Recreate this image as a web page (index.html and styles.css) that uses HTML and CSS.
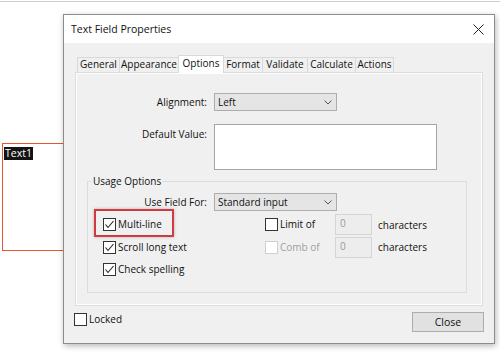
FILE: index.html
```html
<!DOCTYPE html>
<html>
<head>
<meta charset="utf-8">
<link rel="stylesheet" href="styles.css">
</head>
<body>
<div class="desk">
  <div class="topline"></div>
  <div class="pdf-field"><span class="field-name">Text1</span></div>

  <div class="dialog">
    <div class="titlebar">
      <span class="title">Text Field Properties</span>
      <svg class="close-x" width="11" height="11" viewBox="0 0 11 11"><path d="M0.5 0.5L10.5 10.5M10.5 0.5L0.5 10.5" stroke="#222" stroke-width="1" fill="none"/></svg>
    </div>
    <div class="dlg-body">
      <div class="tabs">
        <div class="tab t1">General</div>
        <div class="tab t2">Appearance</div>
        <div class="tab t3 active">Options</div>
        <div class="tab t4">Format</div>
        <div class="tab t5">Validate</div>
        <div class="tab t6">Calculate</div>
        <div class="tab t7">Actions</div>
      </div>
      <div class="panel">
        <div class="form-grid">
          <label class="lbl">Alignment:</label>
          <div class="select">Left<svg class="chev" width="8" height="5" viewBox="0 0 8 5"><polyline points="0.5,0.5 4,4 7.5,0.5" stroke="#555" fill="none"/></svg></div>
          <label class="lbl top">Default Value:</label>
          <div class="textarea"></div>
        </div>
        <fieldset class="group">
          <legend>Usage Options</legend>
          <div class="use-row">
            <label class="lbl">Use Field For:</label>
            <div class="select">Standard input<svg class="chev" width="8" height="5" viewBox="0 0 8 5"><polyline points="0.5,0.5 4,4 7.5,0.5" stroke="#555" fill="none"/></svg></div>
          </div>
          <div class="opts">
            <div class="chk highlighted">
              <span class="box"><svg width="11" height="11" viewBox="0 0 11 11"><polyline points="1.5,5.5 4,8.5 9.5,2" stroke="#222" stroke-width="1.1" fill="none"/></svg></span>Multi-line
              <span class="hl"></span>
            </div>
            <div class="limit">
              <div class="chk lim-chk"><span class="box"></span>Limit of</div>
              <div class="num">0</div>
              <span class="unit">characters</span>
            </div>
            <div class="chk">
              <span class="box"><svg width="11" height="11" viewBox="0 0 11 11"><polyline points="1.5,5.5 4,8.5 9.5,2" stroke="#222" stroke-width="1.1" fill="none"/></svg></span>Scroll long text
            </div>
            <div class="limit">
              <div class="chk lim-chk disabled"><span class="box"></span>Comb of</div>
              <div class="num">0</div>
              <span class="unit">characters</span>
            </div>
            <div class="chk">
              <span class="box"><svg width="11" height="11" viewBox="0 0 11 11"><polyline points="1.5,5.5 4,8.5 9.5,2" stroke="#222" stroke-width="1.1" fill="none"/></svg></span>Check spelling
            </div>
          </div>
        </fieldset>
      </div>
      <div class="footer">
        <div class="chk locked"><span class="box"></span>Locked</div>
        <button class="btn">Close</button>
      </div>
    </div>
  </div>
</div>
</body>
</html>
```
FILE: styles.css
```css
* { box-sizing: border-box; }
html, body { margin: 0; padding: 0; }
body {
  width: 500px;
  height: 353px;
  overflow: hidden;
  background: #fff;
  font-family: "Open Sans", "Noto Sans", sans-serif;
  font-size: 10px;
  color: #111;
}
.desk { position: relative; width: 500px; height: 353px; }
.topline { height: 1px; margin-top: 1px; background: #cfcfcf; }

.pdf-field {
  position: absolute;
  left: 2px;
  top: 142px;
  width: 80px;
  height: 108px;
  border: 1px solid #e4582c;
  padding: 2px 0 0 1px;
}
.field-name {
  display: inline-block;
  background: #141414;
  color: #fff;
  font-size: 10.5px;
  line-height: 13px;
  padding: 0 1px;
}

.dialog {
  position: absolute;
  left: 63px;
  top: 13px;
  width: 432px;
  height: 330px;
  border: 1px solid #8c8c8c;
  background: #f0f0f0;
  box-shadow: 1px 2px 6px rgba(0,0,0,0.28);
  display: flex;
  flex-direction: column;
}
.titlebar {
  height: 28px;
  background: #fff;
  display: flex;
  align-items: center;
  justify-content: space-between;
  padding: 0 10px 0 7px;
}
.title { font-size: 10.5px; color: #111; }
.close-x { display: block; }

.dlg-body { flex: 1; padding: 12px 11px 0 11px; }

.tabs {
  display: flex;
  align-items: flex-end;
  height: 17px;
  padding-left: 2px;
  position: relative;
  z-index: 1;
}
.tab {
  height: 15px;
  line-height: 13px;
  text-align: center;
  border: 1px solid #d9d9d9;
  border-bottom: none;
  background: #f0f0f0;
  margin-right: -1px;
  white-space: nowrap;
}
.tab.active {
  height: 18px;
  margin-bottom: -1px;
  background: #fff;
  line-height: 15px;
  position: relative;
  z-index: 2;
}
.t1 { width: 43px; }
.t2 { width: 60px; }
.t3 { width: 46px; }
.t4 { width: 40px; }
.t5 { width: 46px; }
.t6 { width: 49px; }
.t7 { width: 39px; }

.panel {
  height: 234px;
  border: 1px solid #dcdcdc;
  box-shadow: inset 0 0 0 1px #fff;
  background: #f0f0f0;
  padding-top: 20px;
}
.form-grid {
  display: grid;
  grid-template-columns: 131px 223px;
  column-gap: 7px;
  row-gap: 13px;
  align-items: center;
}
.lbl { text-align: right; line-height: 15px; }
.lbl.top { align-self: start; padding-top: 3px; }

.select {
  width: 123px;
  height: 18px;
  background: #e5e5e5;
  border: 1px solid #adadad;
  display: flex;
  align-items: center;
  justify-content: space-between;
  padding: 0 4px 0 3px;
}
.chev { display: block; }
.textarea {
  width: 223px;
  height: 46px;
  background: #fff;
  border: 1px solid #a5a5a5;
}

.group {
  margin: 3px 0 0 11px;
  width: 380px;
  border: 1px solid #dcdcdc;
  padding: 4px 0 11px 0;
  min-width: 0;
}
.group legend {
  padding: 0 2px;
  margin-left: 3px;
  line-height: 16px;
}
.use-row {
  display: grid;
  grid-template-columns: 119px 123px;
  column-gap: 7px;
  align-items: center;
}

.opts {
  display: grid;
  grid-template-columns: 162px auto;
  grid-template-rows: 23px 22px 23px;
  margin-top: 2px;
  padding-left: 15px;
  align-items: center;
}
.chk {
  display: flex;
  align-items: center;
  position: relative;
  line-height: 15px;
}
.box {
  width: 13px;
  height: 13px;
  border: 1px solid #333;
  background: #fff;
  margin-right: 2px;
  flex: none;
  display: flex;
  align-items: center;
  justify-content: center;
}
.box svg { display: block; }
.hl {
  position: absolute;
  left: -9px;
  top: -8px;
  width: 80px;
  height: 28px;
  border: 2px solid #d03a40;
  box-shadow: 0 0 3px rgba(0,0,0,0.25);
  pointer-events: none;
}
.limit {
  display: flex;
  align-items: center;
}
.lim-chk { width: 70px; }
.chk.disabled { color: #a0a0a0; }
.chk.disabled .box { border-color: #cfcfcf; }
.num {
  width: 37px;
  height: 21px;
  background: #ededed;
  border: 1px solid #d5d5d5;
  color: #9a9a9a;
  padding: 1px 0 0 4px;
  line-height: 14px;
  margin-right: 6px;
}

.footer {
  display: flex;
  justify-content: space-between;
  align-items: flex-start;
  margin-top: 6px;
}
.locked { margin: 0 0 0 -1px; }
.btn {
  width: 72px;
  height: 20px;
  background: #e1e1e1;
  border: 1px solid #adadad;
  font-family: inherit;
  font-size: 10.5px;
  color: #111;
  padding: 0;
  margin-right: -1px;
}
```
